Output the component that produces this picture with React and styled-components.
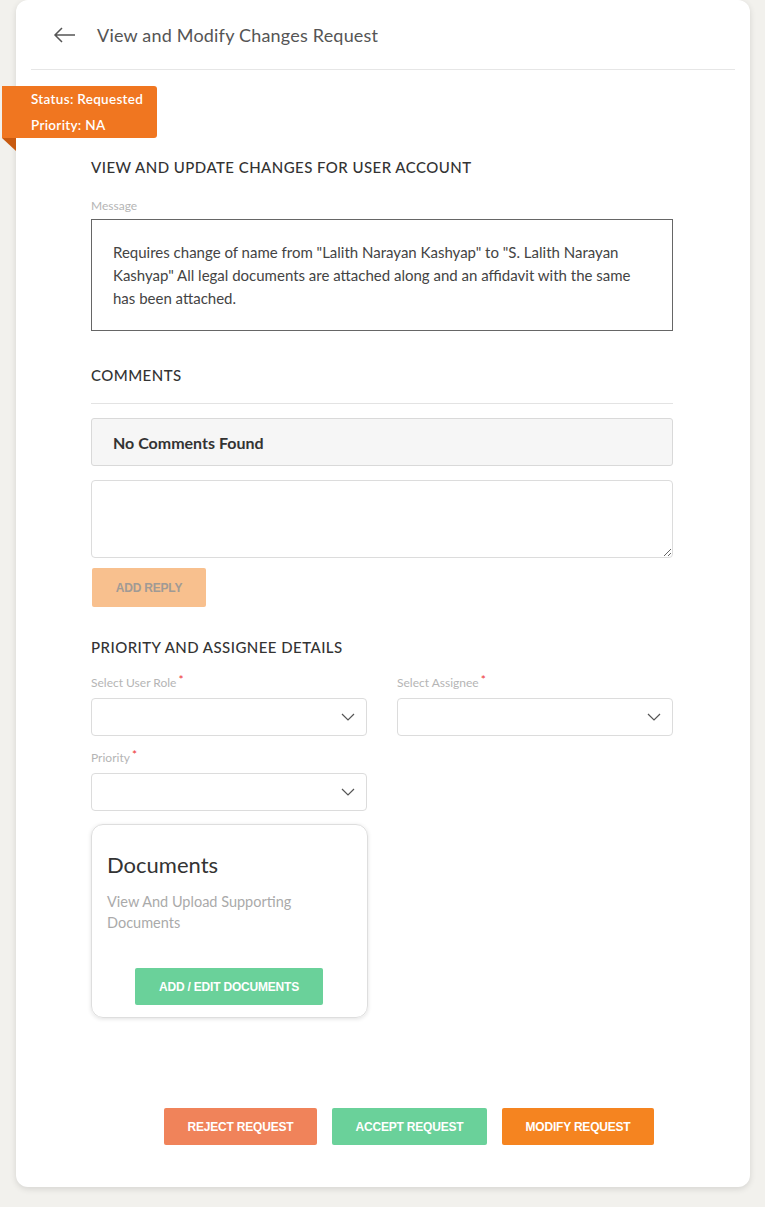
import React from "react";
import styled, { createGlobalStyle } from "styled-components";

const GlobalStyle = createGlobalStyle`
  html, body {
    margin: 0;
    padding: 0;
    background: #f2f1ed;
    font-family: Lato, "Open Sans", "Liberation Sans", sans-serif;
  }
  * {
    box-sizing: border-box;
  }
`;

const Page = styled.div`
  padding: 0 15px 20px 16px;
`;

const Card = styled.div`
  position: relative;
  width: 734px;
  background: #fff;
  border-radius: 12px;
  box-shadow: 0 2px 6px rgba(0, 0, 0, 0.12);
  padding-bottom: 42px;
`;

const Header = styled.div`
  display: flex;
  align-items: center;
  height: 70px;
  margin: 0 15px;
  padding-left: 22px;
  gap: 21px;
  border-bottom: 1px solid #e6e6e6;
`;

const BackButton = styled.button`
  display: flex;
  align-items: center;
  padding: 0;
  border: none;
  background: none;
  cursor: pointer;
`;

const Title = styled.h1`
  margin: 0;
  font-size: 18px;
  font-weight: 400;
  letter-spacing: 0.2px;
  color: #555;
`;

const Ribbon = styled.div`
  position: absolute;
  left: -14px;
  top: 86px;
  width: 155px;
  height: 52px;
  padding: 0 0 0 29px;
  background: #f07620;
  border-radius: 0 3px 3px 0;
  color: #fff;
  font-size: 13.5px;
  font-weight: 600;
  letter-spacing: 0.3px;
  line-height: 26px;

  &::after {
    content: "";
    position: absolute;
    left: 0;
    top: 52px;
    border-top: 13px solid #c85a10;
    border-left: 14px solid transparent;
  }
`;

const Content = styled.div`
  padding: 87px 0 0 75px;
  width: 657px;
`;

const SectionTitle = styled.h2`
  margin: ${(p) => p.$top || 0}px 0 0;
  font-size: 15px;
  line-height: 20px;
  font-weight: 500;
  color: #333;
  text-transform: uppercase;
  letter-spacing: 0.45px;
`;

const Label = styled.div`
  margin-top: ${(p) => p.$top || 0}px;
  font-size: 12px;
  line-height: 16px;
  color: #b5b5b5;

  span {
    color: #e33;
    position: relative;
    top: -3px;
    margin-left: 2px;
  }
`;

const MessageBox = styled.div`
  margin-top: 5px;
  border: 1px solid #666;
  padding: 21px 20px 20px 21px;
  font-size: 15px;
  line-height: 23px;
  color: #444;
`;

const Divider = styled.div`
  margin-top: 18px;
  height: 1px;
  background: #e3e3e3;
`;

const EmptyBox = styled.div`
  margin-top: 14px;
  height: 48px;
  display: flex;
  align-items: center;
  padding-left: 21px;
  background: #f6f6f6;
  border: 1px solid #d9d9d9;
  border-radius: 3px;
  font-size: 16px;
  font-weight: 700;
  color: #333;
`;

const ReplyArea = styled.textarea`
  display: block;
  margin-top: 14px;
  width: 100%;
  height: 78px;
  border: 1px solid #dcdcdc;
  border-radius: 4px;
  resize: vertical;
  font-family: inherit;
  outline: none;
`;

const Button = styled.button`
  display: block;
  width: ${(p) => p.$w}px;
  height: ${(p) => p.$h || 37}px;
  margin: ${(p) => p.$margin || 0};
  border: none;
  border-radius: 2px;
  background: ${(p) => p.$bg};
  color: ${(p) => p.$color || "#fff"};
  font-family: "Liberation Sans", Arial, sans-serif;
  font-size: 12px;
  font-weight: 700;
  text-transform: uppercase;
  letter-spacing: -0.2px;
  cursor: pointer;
`;

const FieldGrid = styled.div`
  display: grid;
  grid-template-columns: 276px 276px;
  column-gap: 30px;
`;

const Field = styled.div`
  display: flex;
  flex-direction: column;
`;

const SelectBox = styled.div`
  margin-top: 7px;
  height: 38px;
  border: 1px solid #dcdcdc;
  border-radius: 4px;
  display: flex;
  align-items: center;
  justify-content: flex-end;
  padding-right: 11px;
`;

const DocCard = styled.div`
  margin-top: 13px;
  width: 277px;
  height: 194px;
  border: 1px solid #dedede;
  border-radius: 12px;
  box-shadow: 0 1px 4px rgba(0, 0, 0, 0.12);
  padding: 26px 16px 12px 15px;
  display: flex;
  flex-direction: column;
`;

const DocTitle = styled.div`
  font-size: 22px;
  line-height: 28px;
  color: #333;
`;

const DocText = styled.div`
  margin-top: 12px;
  font-size: 14.5px;
  line-height: 21px;
  color: #aaa;
`;

const Actions = styled.div`
  display: flex;
  gap: 15px;
  margin: 90px 0 0 73px;
`;

const Chevron = () => (
  <svg width="14" height="8" viewBox="0 0 14 8" fill="none">
    <path d="M1 1l6 6 6-6" stroke="#555" strokeWidth="1.2" />
  </svg>
);

const Select = ({ label }) => (
  <Field>
    <Label $top={label.top}>
      {label.text}
      <span>*</span>
    </Label>
    <SelectBox>
      <Chevron />
    </SelectBox>
  </Field>
);

const App = () => {
  return (
    <Page>
      <GlobalStyle />
      <Card>
        <Header>
          <BackButton>
            <svg width="23" height="16" viewBox="0 0 23 16" fill="none">
              <path
                d="M22 8H2M9 1L2 8l7 7"
                stroke="#555"
                strokeWidth="1.5"
              />
            </svg>
          </BackButton>
          <Title>View and Modify Changes Request</Title>
        </Header>

        <Ribbon>
          <div>Status: Requested</div>
          <div>Priority: NA</div>
        </Ribbon>

        <Content>
          <SectionTitle>View and update changes for user account</SectionTitle>
          <Label $top={21}>Message</Label>
          <MessageBox>
            Requires change of name from "Lalith Narayan Kashyap" to "S. Lalith
            Narayan Kashyap" All legal documents are attached along and an
            affidavit with the same has been attached.
          </MessageBox>

          <SectionTitle $top={34}>Comments</SectionTitle>
          <Divider />
          <EmptyBox>No Comments Found</EmptyBox>
          <ReplyArea />
          <Button $w={114} $h={39} $bg="#f8c08e" $color="#a09a95" $margin="10px 0 0 1px">
            Add Reply
          </Button>

          <SectionTitle $top={30}>Priority and assignee details</SectionTitle>
          <FieldGrid>
            <Select label={{ text: "Select User Role", top: 18 }} />
            <Select label={{ text: "Select Assignee", top: 18 }} />
            <Select label={{ text: "Priority", top: 14 }} />
          </FieldGrid>

          <DocCard>
            <DocTitle>Documents</DocTitle>
            <DocText>View And Upload Supporting Documents</DocText>
            <Button $w={188} $bg="#6ad19a" $margin="auto auto 0">
              Add / Edit Documents
            </Button>
          </DocCard>

          <Actions>
            <Button $w={153} $bg="#f0835a">
              Reject Request
            </Button>
            <Button $w={155} $bg="#6ad19a">
              Accept Request
            </Button>
            <Button $w={152} $bg="#f58420">
              Modify Request
            </Button>
          </Actions>
        </Content>
      </Card>
    </Page>
  );
};

export default App;
